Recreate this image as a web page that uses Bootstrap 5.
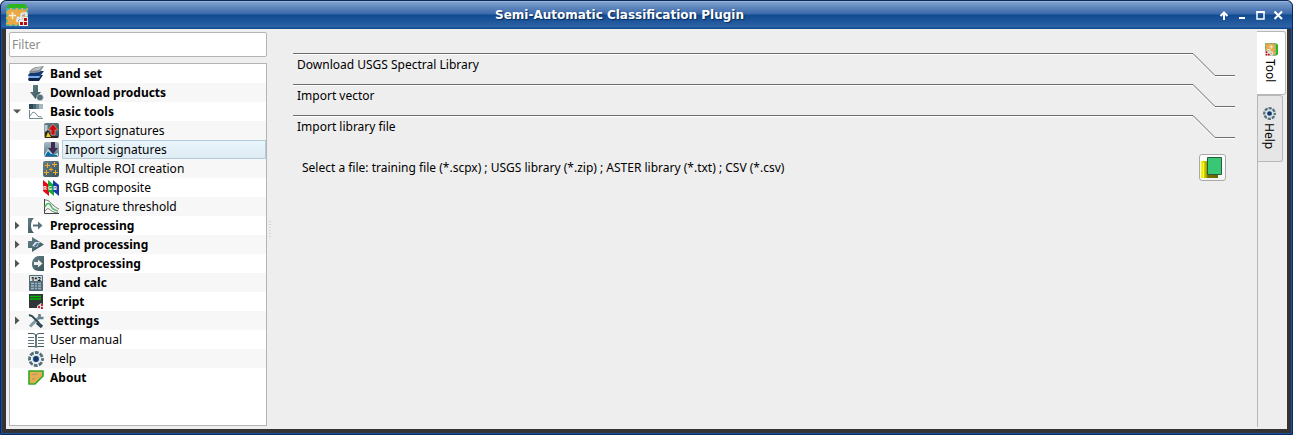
<!DOCTYPE html>
<html lang="en">
<head>
<meta charset="utf-8">
<title>Semi-Automatic Classification Plugin</title>
<link href="https://cdn.jsdelivr.net/npm/bootstrap@5.3.0/dist/css/bootstrap.min.css" rel="stylesheet">
<style>
body{margin:0;background:#fff;overflow:hidden;font:12px/19px "Noto Sans",sans-serif;color:#000}
svg{display:block;flex:none}
.win{width:1293px;height:435px;background:#333;border:1px solid #0b2a5c;box-shadow:inset 0 0 0 1px #1a4f9c;border-radius:6px 6px 0 0;padding:0 5px 5px;overflow:hidden}
.title-bar{height:28px;margin:0 -5px;background:linear-gradient(#b3c8e4 0,#7d9fcd 1px,#3a68aa 13px,#104a90 14px,#2e62a6 26px,#104a93 27px);border-radius:5px 5px 0 0}
.app-logo{margin:3px 0 0 5px}
.title-text{font:bold 12px/28px "DejaVu Sans",sans-serif;color:#fff;text-shadow:1px 1px 1px #0a2a58;margin-left:-5px}
.win-buttons{margin-right:1px}
.client{height:400px;background:#eee}
.side{width:258px;margin:3px 0 0 3px}
.filter-box{height:25px;border:1px solid #b4b4b4;border-radius:2px;background:#fff;color:#8c8c8c;padding:0 2px;line-height:23px;width:258px}
.filter-box::placeholder{color:#8c8c8c;opacity:1}
.tree{height:363px;margin-top:6px;border:1px solid #b4b4b4;background:#fff}
.tree li{height:19px;padding-left:2px}
.tree li:nth-child(even){background:#f7f7f7}
.arrow{width:10px;height:19px;margin-right:6px}
.lbl{margin-left:3px;line-height:17px;border:1px solid transparent;padding-left:2px;height:19px;white-space:nowrap}
.sub-item .arrow{width:25px}
.picked .lbl{flex:1;background:linear-gradient(#e9f5fc,#dfecf3);border-color:#b5cbd9}
.splitter{width:26px;padding:192px 0 0 2px}
.tool-page{width:942px;margin-top:24px}
.fold{height:31px}
.fold-label{height:31px;margin-top:-23px;padding:1px 0 0 4px}
.picker{margin-top:8px;padding:0 9px;height:27px}
.file-btn{width:27px;height:27px;border:1px solid #aaa;border-radius:3px;background:linear-gradient(#fff,#f4f4f4);padding:1px}
.tabs{width:30px;margin:2px 0 2px auto;border-left:1px solid #b8b8b8;height:396px}
.side-tab{writing-mode:vertical-rl;border:1px solid #b8b8b8;border-left:0;border-radius:0 3px 3px 0;line-height:18px}
.tab-on{width:29px;margin-left:-1px;height:64px;background:#fff;padding:11px 2px 0 0}
.tab-off{width:25px;height:67px;background:#e6e6e6;padding:11px 2px 0 0}
.tab-logo{transform:rotate(90deg);margin:0 0 3px 2px}
.tab-help{margin:0 0 3px 0}
</style>
<script src="https://cdn.jsdelivr.net/npm/bootstrap@5.3.0/dist/js/bootstrap.bundle.min.js"></script>
</head>
<body>
<svg width="0" height="0" class="position-absolute">
<defs>
<linearGradient id="slate" x2="1" y2="1"><stop stop-color="#668087"/><stop offset="1" stop-color="#38545c"/></linearGradient>
<linearGradient id="steel" x2="0" y2="1"><stop stop-color="#a9bbc4"/><stop offset="1" stop-color="#4e7480"/></linearGradient>
<linearGradient id="gold" x2="1"><stop stop-color="#ffff00"/><stop offset=".3" stop-color="#b5b000"/><stop offset=".4" stop-color="#777400"/><stop offset="1" stop-color="#656200"/></linearGradient>
<symbol id="logo" viewBox="0 0 22 22"><path d="M3 0h16l3 4H0z" fill="#2cb51c"/><path d="M0 4h22v18H0z" fill="#eba944"/><path d="M.7 4.700h20.600v16.600H.7z" fill="none" stroke="#2fb3b0" stroke-width="1.400" stroke-dasharray="3.500 2"/><path d="M3 11.500h7M6.500 8v7" stroke="#f4f0e0" stroke-width="1.500"/><path d="M11 18l1-4 3 1 1-5 4-.5.5 3" fill="none" stroke="#dfe9f2" stroke-width="2.600"/><path d="M12 17l2-2M16 12l3-2" stroke="#7d98ab"/><path d="M13 16h4v-3h5v9h-9z" fill="#eee"/><path d="M14 18h3v3h-3zM18 14h3v3h-3zM18 18h3v3h-3z" fill="#b50d17"/></symbol>
<symbol id="helpicon" viewBox="0 0 16 16"><circle cx="8" cy="8" r="6.500" fill="none" stroke="#557079" stroke-width="2.800" stroke-dasharray="3.900 1.205" stroke-dashoffset="1.950"/><circle cx="8" cy="8" r="4.300" fill="#d0e2ec"/><circle cx="8" cy="8" r="2.900" fill="#14386b"/></symbol>
<symbol id="closedarrow" viewBox="0 0 10 19"><path d="M3 5.500l4.500 4-4.500 4z" fill="#555"/></symbol>
</defs>
</svg>
<main class="win">
<header class="title-bar d-flex align-items-start">
<svg class="app-logo" width="22" height="22"><use href="#logo"/></svg>
<div class="title-text flex-fill text-center">Semi-Automatic Classification Plugin</div>
<svg class="win-buttons" width="75" height="28" fill="none" stroke="#fff"><path d="M8 19v-7M4.500 15l3.500-3.500 3.500 3.500" stroke-width="2"/><path d="M23 17h6" stroke-width="2"/><path d="M41 11h7v7h-7z" stroke-width="1.500"/><path d="M40.300 11h8.400" stroke-width="2"/><path d="M58.500 10.500l7.500 7.500M66 10.500L58.500 18" stroke-width="2"/></svg>
</header>
<div class="client d-flex">
<aside class="side">
<input class="filter-box d-block" placeholder="Filter">
<ul class="tree list-unstyled mb-0">
<li class="d-flex align-items-center fw-bold"><span class="arrow"></span><svg width="16" height="16"><path d="M0 13l3-4h12l-4 6H1z" fill="#0c254b"/><path d="M0 10l3-4h12l-4 6H1z" fill="#7faae5"/><path d="M0 9l4-4h12l-4 5H1z" fill="#123a7a"/><path d="M1 6q4-5 8-5l7-1-4 6-5 1H2z" fill="#858b8e"/><path d="M3 5q4-4 11-4l-3 3z" fill="#bfc2c3"/></svg><span class="lbl">Band set</span></li>
<li class="d-flex align-items-center fw-bold"><span class="arrow"></span><svg width="16" height="16"><path d="M5 0h5v7h3l-5.500 7L2 7h3z" fill="url(#slate)"/><circle cx="12" cy="12.500" r="3.300" fill="#56707a" stroke="#f7f7f7" stroke-width=".5"/></svg><span class="lbl">Download products</span></li>
<li class="d-flex align-items-center fw-bold"><svg class="arrow"><path d="M1 7.500h8l-4 4z" fill="#555"/></svg><svg width="16" height="16"><path d="M1 0h4v5H1z" fill="#2c4b54"/><path d="M5 0h3v5H5z" fill="#4a666e"/><path d="M8 0h3v5H8z" fill="#728991"/><path d="M11 0h4v5h-4z" fill="#a5b9c0"/><path d="M1.500 6v8.500H15" fill="none" stroke="#718990"/><path d="M2 12l3-4 3 1.500 2 3 4 .5" fill="none" stroke="#78939b"/></svg><span class="lbl">Basic tools</span></li>
<li class="d-flex align-items-center sub-item"><span class="arrow"></span><svg width="16" height="16"><rect x="1" y="0" width="15" height="15" rx="2" fill="url(#slate)"/><path d="M1.500 2h3v12h-3z" fill="#b9ccd3"/><path d="M2 15V9l3-2 4 6h6v2z" fill="#322"/><path d="M3 14l2-5 3 5z" fill="#eccd28"/><path d="M8 12V7H5l5-6 5 6h-3v5z" fill="#cc0b08" stroke="#e5c4bd" stroke-width=".5"/></svg><span class="lbl">Export signatures</span></li>
<li class="d-flex align-items-center sub-item picked"><span class="arrow"></span><svg width="16" height="16"><rect x="1" y="0" width="15" height="15" rx="2" fill="url(#steel)"/><path d="M1 14l4-7 5 6 5-2v3z" fill="#cfe8ef"/><path d="M2 14l3-5 3 3 6 1v1z" fill="#086ca7"/><path d="M8 0h4v6h3l-5 6-5-6h3z" fill="#402a53"/></svg><span class="lbl">Import signatures</span></li>
<li class="d-flex align-items-center sub-item"><span class="arrow"></span><svg width="16" height="16"><rect width="16" height="16" rx="2" fill="url(#slate)"/><path d="M2 4.500h5M4.500 2v5M9 3.500h5M11.500 1v5M1 11.500h5M3.500 9v5M6 8.500h4M8 6.500v4M10 11.500h5M12.500 9v5" stroke="#f5a92e"/></svg><span class="lbl">Multiple ROI creation</span></li>
<li class="d-flex align-items-center sub-item"><span class="arrow"></span><svg width="16" height="16"><path d="M0 0l6 5v11L0 11z" fill="#e00815"/><path d="M5 0l6 5v11l-6-5z" fill="#14a735"/><path d="M10 0l6 5v11l-6-5z" fill="#163cab"/><text x="0" y="10" font-family="Noto Sans" font-size="6" font-weight="700" textLength="14" fill="#f4eeee">RGB</text></svg><span class="lbl">RGB composite</span></li>
<li class="d-flex align-items-center sub-item"><span class="arrow"></span><svg width="16" height="16" fill="none"><path d="M1.500 0v14.500H16" stroke="#444"/><path d="M2 8c2-5 5-4 6-1s3 4 7 5" stroke="#55bc67" stroke-width="1.700"/><path d="M2 1c5 0 5 3 8 5s3 3 6 4M2 12c3-4 4-2 6-.5s4 2 7 2.500" stroke="#555" stroke-width=".8"/></svg><span class="lbl">Signature threshold</span></li>
<li class="d-flex align-items-center fw-bold"><svg class="arrow"><use href="#closedarrow"/></svg><svg width="16" height="16"><path d="M0 0h6C2 3 2 12 6 15H0z" fill="url(#slate)"/><path d="M5 6.500h5V3.500l4.500 4-4.500 4v-3H5z" fill="#58717a"/></svg><span class="lbl">Preprocessing</span></li>
<li class="d-flex align-items-center fw-bold"><svg class="arrow"><use href="#closedarrow"/></svg><svg width="16" height="16"><path d="M4 0l12 7.500L4 15v-4H0V4h4z" fill="url(#slate)"/><path d="M4 9l3-4h5l-3 5z" fill="#d5e0ea"/><path d="M6 9l3-3h2l-3 4z" fill="#4c7096"/></svg><span class="lbl">Band processing</span></li>
<li class="d-flex align-items-center fw-bold"><svg class="arrow"><use href="#closedarrow"/></svg><svg width="16" height="16"><path d="M16 0v15h-5C6 15 4 12 4 8s2-7 6-8z" fill="url(#slate)"/><path d="M6 6h4V3.500l4.500 4-4.500 4V9H6z" fill="#eee"/></svg><span class="lbl">Postprocessing</span></li>
<li class="d-flex align-items-center fw-bold"><span class="arrow"></span><svg width="16" height="16"><rect x="1" width="14" height="16" rx="1" fill="#526b74"/><path d="M2 1h12v5H2z" fill="#d6dedf"/><text x="3" y="5.800" font-family="Noto Sans" font-weight="700" font-size="6" textLength="10">1*2</text><path d="M3 8.500h3m1 0h2m1 0h3M3 11h3m1 0h2m1 0h3M3 13.500h3m1 0h2m1 0h3" stroke="#9eb4d0" stroke-width="1.300"/></svg><span class="lbl">Band calc</span></li>
<li class="d-flex align-items-center fw-bold"><span class="arrow"></span><svg width="16" height="16"><path d="M1 0h14v14H1z" fill="#303638"/><path d="M2 2.500h11M2 5h11" stroke="#00b800" stroke-width="1.300"/><path d="M9 12l4-3 2 2v4H9z" fill="#d9e0e5"/><path d="M10 12h2v2h-2zM13 10h2v2h-2zM13 13h2v2h-2z" fill="#cc2833"/></svg><span class="lbl">Script</span></li>
<li class="d-flex align-items-center fw-bold"><svg class="arrow"><use href="#closedarrow"/></svg><svg width="16" height="16" fill="none"><path d="M2 13.500l9-9" stroke="#8299a3" stroke-width="3"/><path d="M11.500 1v4h4" stroke="#657f8a" stroke-width="2.600"/><path d="M1 2l3 1 7 7" stroke="#304a53" stroke-width="2"/><path d="M9 9.500l5 4.500" stroke="#304a53" stroke-width="3.500"/></svg><span class="lbl">Settings</span></li>
<li class="d-flex align-items-center"><span class="arrow"></span><svg width="16" height="16" fill="none" stroke="#435961"><path d="M0 1.500h5q3 0 3 3 0-3 3-3h5M0 14.500h5q3 0 3 1 0-1 3-1h5"/><path d="M8 3v12" stroke-width="1.600"/><path d="M0 5.500h6M0 8.500h6M0 11.500h6m4-6h6m-6 3h6m-6 3h6" stroke="#60747d" stroke-width="1.200"/></svg><span class="lbl">User manual</span></li>
<li class="d-flex align-items-center"><span class="arrow"></span><svg width="16" height="16"><use href="#helpicon"/></svg><span class="lbl">Help</span></li>
<li class="d-flex align-items-center fw-bold"><span class="arrow"></span><svg width="16" height="16"><path d="M1 1h14v5l-8 8H1z" fill="#e7ad50" stroke="#2eaa27" stroke-width="1.600"/><path d="M4 5l2-1 1 1 3-2M4 9.500l3-1" fill="none" stroke="#a39a79"/></svg><span class="lbl">About</span></li>
</ul>
</aside>
<div class="splitter"><svg width="2" height="16"><path d="M1 0v16" stroke="#bbb" stroke-dasharray="1 2"/></svg></div>
<section class="tool-page">
<svg width="0" height="0" class="position-absolute"><defs><symbol id="foldline" viewBox="0 0 942 24"><path d="M0 1.500h900l22 22h20" fill="none" stroke="#fff"/><path d="M0 .5h900l22 22h20" fill="none" stroke="#6c6c6c"/></symbol></defs></svg>
<div class="fold"><svg width="942" height="24"><use href="#foldline"/></svg><div class="fold-label">Download USGS Spectral Library</div></div>
<div class="fold"><svg width="942" height="24"><use href="#foldline"/></svg><div class="fold-label">Import vector</div></div>
<div class="fold"><svg width="942" height="24"><use href="#foldline"/></svg><div class="fold-label">Import library file</div></div>
<div class="picker d-flex justify-content-between align-items-center"><span>Select a file: training file (*.scpx) ; USGS library (*.zip) ; ASTER library (*.txt) ; CSV (*.csv)</span><button class="file-btn" aria-label="Open a file"><svg width="23" height="23"><path d="M0 5h17v17H0z" fill="url(#gold)"/><path d="M2.500 7v15" stroke="#ffff20"/><path d="M6.500 1.500h14v17h-14z" fill="#38c774" stroke="#245c3d"/></svg></button></div>
</section>
<nav class="tabs">
<div class="side-tab tab-on d-flex align-items-center"><svg class="tab-logo" width="13" height="13"><use href="#logo"/></svg>Tool</div>
<div class="side-tab tab-off d-flex align-items-center"><svg class="tab-help" width="13" height="13"><use href="#helpicon"/></svg>Help</div>
</nav>
</div>
</main>
</body>
</html>
